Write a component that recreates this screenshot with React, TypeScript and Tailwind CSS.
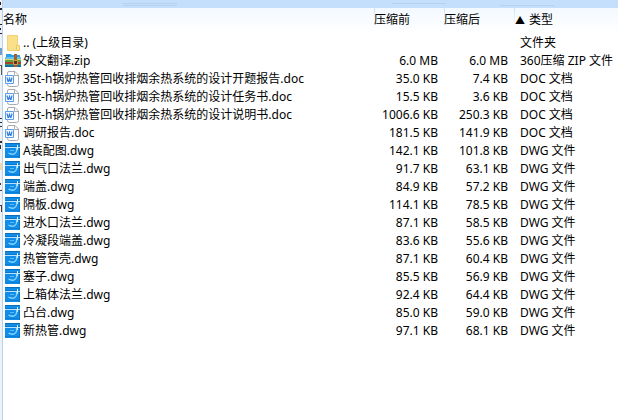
type Kind = "folder" | "zip" | "doc" | "dwg";

type Entry = {
  name: string;
  kind: Kind;
  before: string;
  after: string;
  type: string;
};

const entries: Entry[] = [
  { name: ".. (上级目录)", kind: "folder", before: "", after: "", type: "文件夹" },
  { name: "外文翻译.zip", kind: "zip", before: "6.0 MB", after: "6.0 MB", type: "360压缩 ZIP 文件" },
  { name: "35t-h锅炉热管回收排烟余热系统的设计开题报告.doc", kind: "doc", before: "35.0 KB", after: "7.4 KB", type: "DOC 文档" },
  { name: "35t-h锅炉热管回收排烟余热系统的设计任务书.doc", kind: "doc", before: "15.5 KB", after: "3.6 KB", type: "DOC 文档" },
  { name: "35t-h锅炉热管回收排烟余热系统的设计说明书.doc", kind: "doc", before: "1006.6 KB", after: "250.3 KB", type: "DOC 文档" },
  { name: "调研报告.doc", kind: "doc", before: "181.5 KB", after: "141.9 KB", type: "DOC 文档" },
  { name: "A装配图.dwg", kind: "dwg", before: "142.1 KB", after: "101.8 KB", type: "DWG 文件" },
  { name: "出气口法兰.dwg", kind: "dwg", before: "91.7 KB", after: "63.1 KB", type: "DWG 文件" },
  { name: "端盖.dwg", kind: "dwg", before: "84.9 KB", after: "57.2 KB", type: "DWG 文件" },
  { name: "隔板.dwg", kind: "dwg", before: "114.1 KB", after: "78.5 KB", type: "DWG 文件" },
  { name: "进水口法兰.dwg", kind: "dwg", before: "87.1 KB", after: "58.5 KB", type: "DWG 文件" },
  { name: "冷凝段端盖.dwg", kind: "dwg", before: "83.6 KB", after: "55.6 KB", type: "DWG 文件" },
  { name: "热管管壳.dwg", kind: "dwg", before: "87.1 KB", after: "60.4 KB", type: "DWG 文件" },
  { name: "塞子.dwg", kind: "dwg", before: "85.5 KB", after: "56.9 KB", type: "DWG 文件" },
  { name: "上箱体法兰.dwg", kind: "dwg", before: "92.4 KB", after: "64.4 KB", type: "DWG 文件" },
  { name: "凸台.dwg", kind: "dwg", before: "85.0 KB", after: "59.0 KB", type: "DWG 文件" },
  { name: "新热管.dwg", kind: "dwg", before: "97.1 KB", after: "68.1 KB", type: "DWG 文件" },
];

const headers = ["压缩前", "压缩后"];

function FileIcon({ kind }: { kind: Kind }) {
  return (
    <svg className="w-4 h-4 shrink-0" viewBox="0 0 16 16" fill="none" aria-hidden="true">
      {kind === "folder" && (
        <>
          <path d="M2.500 .5h10v15h-10z" fill="#fbe08c" stroke="#f0d17a" />
          <path d="M11.500 10.500h3v5h-3z" fill="#fbe49a" stroke="#ebc965" />
        </>
      )}
      {kind === "zip" && (
        <>
          <path d="M1 1h5l1 1h8v4H1z" fill="#2b9fea" />
          <path d="M0 4h16v2H0z" fill="#65c2f2" />
          <path d="M0 6h16v1H0z" fill="#d7d66a" />
          <path d="M0 7h16v2H0z" fill="#59a544" />
          <path d="M0 9h16v2H0z" fill="#a8432a" />
          <path d="M0 11h16v3H0z" fill="#16719f" />
          <path d="M0 11h16v1H0z" fill="#3f9b72" />
          <path d="M9 1h3v13H9z" fill="#a5602b" />
          <path d="M8.500 7.500h4v4h-4z" fill="#59351d" stroke="#d99b4e" />
        </>
      )}
      {kind === "doc" && (
        <>
          <path d="M4 .5h6l3.500 3.500v9.500q0 2-2 2h-7q-2 0-2-2V2q0-1.500 1.500-1.500z" fill="#fff" stroke="#a9abae" />
          <path d="M9.500 .5v4h4" stroke="#a9abae" />
          <path d="M.5 4.500h8v8h-8z" fill="#f2f8ff" stroke="#5b9ceb" />
          <path d="M2 6.500l1 4h.5l1-3 1 3H6l1-4" stroke="#3981df" strokeWidth="1.200" />
        </>
      )}
      {kind === "dwg" && (
        <>
          <path d="M0 0h15v15H0z" fill="#118ce9" />
          <path d="M0 0h15v1H0z" fill="#0870bd" />
          <path d="M0 3h15v1H0z" fill="#0b78cb" />
          <path d="M0 4.500h15" stroke="#b5e2ff" />
          <path d="M12.500 2v5" stroke="#e3f5ff" />
          <path d="M14.500 5v10" stroke="#0877c9" />
          <path d="M11.500 5c1 5-3 8-8 5" stroke="#8ad8ff" strokeWidth="1.400" />
          <path d="M5 7.500h4" stroke="#58bdf3" />
          <path d="M0 13.500h14" stroke="#0c7ed3" />
        </>
      )}
    </svg>
  );
}

// Sliver of the window that lies behind the list
function WindowEdge() {
  return (
    <svg className="w-0.5" viewBox="0 0 2 420" aria-hidden="true">
      <path d="M0 2h1v3H0zM0 8h2v2H0zM0 24h2v1H0zM0 28h1v2H0zM0 33h2v1H0z" fill="#24242e" />
      <path d="M0 48h2v7H0z" fill="#6f9fd0" />
      <path d="M0 65h2v1H0zM1 66h1v9H1z" fill="#595960" />
      <path d="M0 118h2v1H0zM0 122h2v1H0zM0 126h2v1H0zM0 141h2v2H0zM0 145h1v4H0z" fill="#30303a" />
      <path d="M0 163h2v7H0z" fill="#efd7ae" />
      <path d="M0 183h1v2H0zM0 190h2v1H0zM0 205h2v1H0zM1 206h1v6H1z" fill="#4c3434" />
    </svg>
  );
}

export default function App() {
  return (
    <main className="flex min-h-screen bg-white font-['Noto_Sans','Noto_Sans_CJK_SC',sans-serif] text-xs text-black">
      <div className="w-[3px] shrink-0 border-r border-[#b9d3ea] bg-[#edf1f8]">
        <WindowEdge />
      </div>
      <div className="min-w-0 grow">
        <div className="flex h-2 bg-[#c4dffb] pt-[3px]">
          <div className="ml-[120px] h-[3px] w-[54px] border-y border-[#b5d1ee]" />
          <div className="ml-[215px] h-px w-[54px] bg-[#b5d1ee]" />
          <div className="mt-0.5 ml-[54px] h-px w-[54px] bg-[#b5d1ee]" />
        </div>
        <table className="w-full table-fixed border-collapse whitespace-nowrap leading-[18px]">
          <colgroup>
            <col />
            <col className="w-[70px]" />
            <col className="w-[70px]" />
            <col className="w-[104px]" />
          </colgroup>
          <thead className="bg-linear-to-b from-[#f3f9ff] to-white text-left">
            <tr className="h-[26px] align-top">
              <th className="p-0 pt-[3px] font-normal">名称</th>
              {headers.map((header) => (
                <th
                  key={header}
                  className="bg-linear-to-b from-[#c9e2f7] to-white bg-[length:1px_20px] bg-no-repeat p-0 pt-[3px] font-normal"
                >
                  {header}
                </th>
              ))}
              <th className="bg-linear-to-b from-[#c9e2f7] to-white bg-[length:1px_20px] bg-no-repeat p-0 pt-[3px] font-normal">
                <div className="flex items-center gap-1 pl-px">
                  <span className="text-[10px]">▲</span>
                  <span>类型</span>
                </div>
              </th>
            </tr>
          </thead>
          <tbody>
            {entries.map((entry) => (
              <tr key={entry.name} className="h-[18px]">
                <td className="p-0">
                  <div className="flex items-center gap-0.5 pl-0.5">
                    <FileIcon kind={entry.kind} />
                    <span>{entry.name}</span>
                  </div>
                </td>
                <td className="p-0 pr-1.5 text-right">{entry.before}</td>
                <td className="p-0 pr-1.5 text-right">{entry.after}</td>
                <td className="p-0 pl-1.5">{entry.type}</td>
              </tr>
            ))}
          </tbody>
        </table>
      </div>
    </main>
  );
}
